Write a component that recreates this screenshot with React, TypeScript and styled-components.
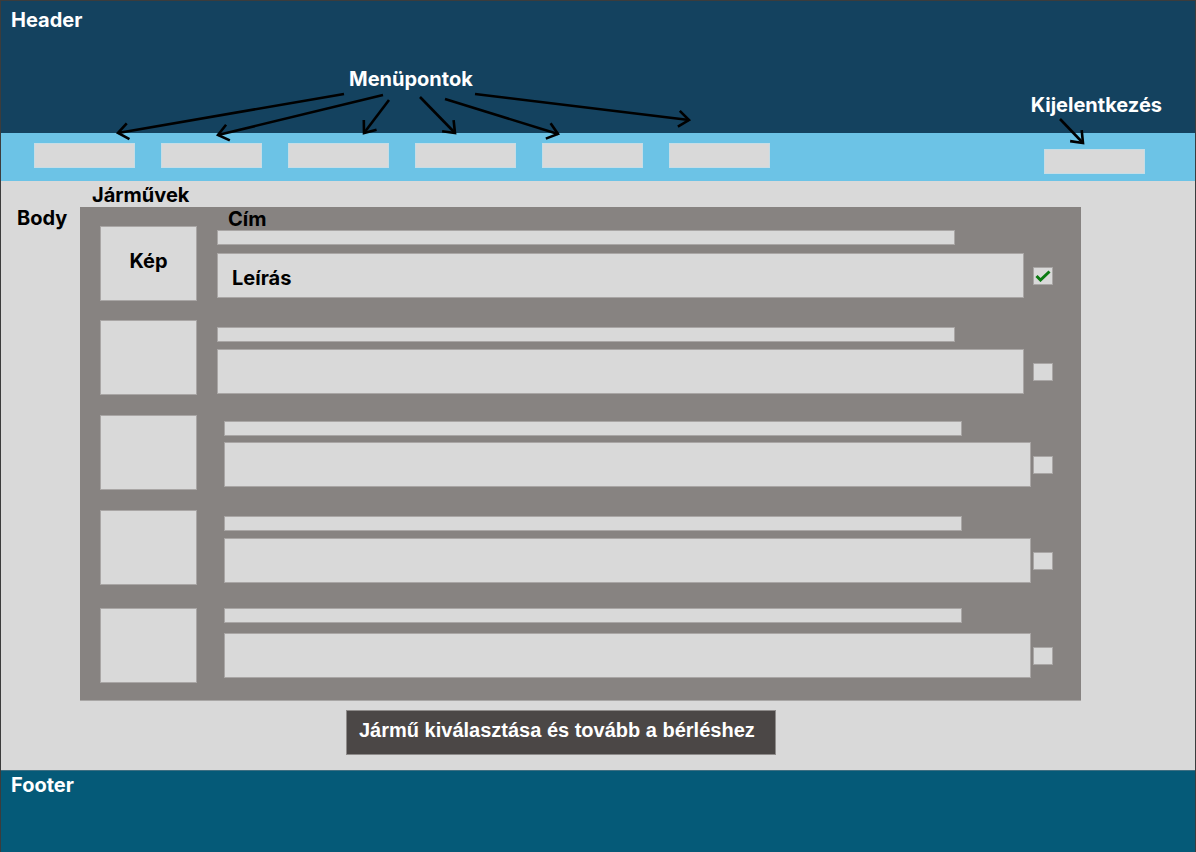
import React from "react";
import styled, { createGlobalStyle } from "styled-components";

const GlobalStyle = createGlobalStyle`
  html, body { margin: 0; padding: 0; background: #d9d9d9; }
  body { font-family: Inter, "Noto Sans", "Liberation Sans", sans-serif; }
  * { box-sizing: border-box; }
`;

const Frame = styled.div`
  position: relative;
  width: 1196px;
  height: 852px;
  display: flex;
  flex-direction: column;
  overflow: hidden;
  border: 1px solid #3c3c3c;
  border-bottom: none;
`;

const Label = styled.div<{ $light?: boolean }>`
  font-size: 20px;
  font-weight: 700;
  line-height: 24px;
  color: ${(p) => (p.$light ? "#ffffff" : "#000000")};
  white-space: nowrap;
`;

const Header = styled.header`
  height: 132px;
  background: #14425f;
  padding: 7px 10px 0;
  display: flex;
  flex-direction: column;
`;

const Annotations = styled.div`
  display: flex;
  align-items: flex-start;
`;

const MenuNote = styled(Label)`
  margin-top: 35px;
  margin-left: 338px;
`;

const LogoutNote = styled(Label)`
  margin-top: 61px;
  margin-left: auto;
  margin-right: 23px;
`;

const Nav = styled.nav`
  height: 48px;
  background: #6cc3e6;
  display: flex;
  align-items: flex-start;
  padding-left: 33px;
  gap: 26px;
`;

const NavItem = styled.div<{ $top: number }>`
  width: 101px;
  height: 25px;
  margin-top: ${(p) => p.$top}px;
  background: #d9d9d9;
  border: 1px solid #c6dde6;
`;

const LogoutItem = styled(NavItem)`
  margin-left: auto;
  margin-right: 50px;
`;

const Body = styled.main`
  flex: 1;
  background: #d9d9d9;
  display: flex;
  align-items: flex-start;
`;

const BodyLabel = styled(Label)`
  width: 79px;
  padding-left: 16px;
  padding-top: 25px;
`;

const BodyMain = styled.div`
  display: flex;
  flex-direction: column;
`;

const SectionTitle = styled(Label)`
  margin-left: 12px;
  margin-top: 3px;
  line-height: 23px;
`;

const Panel = styled.section`
  position: relative;
  width: 1001px;
  height: 494px;
  background: #878381;
  border-bottom: 1px solid #a9a7a6;
  padding: 19px 28px 19px 20px;
  display: flex;
  flex-direction: column;
  gap: 20px;
`;

const PanelCaption = styled(Label)`
  position: absolute;
  top: 0;
  left: 148px;
`;

const Row = styled.div<{ $shift: number }>`
  height: 75px;
  margin-top: ${(p) => p.$shift}px;
  display: flex;
  align-items: flex-start;
`;

const Picture = styled.div`
  width: 97px;
  height: 75px;
  background: #d9d9d9;
  border: 1px solid #a9a6a5;
  display: flex;
  justify-content: center;
  padding-top: 22px;
`;

const Content = styled.div<{ $indent: number; $top: number; $gap: number }>`
  flex: 1;
  margin-left: ${(p) => p.$indent}px;
  padding-top: ${(p) => p.$top}px;
  display: flex;
  flex-direction: column;
  gap: ${(p) => p.$gap}px;
`;

const TitleBar = styled.div`
  width: 738px;
  height: 15px;
  background: #d9d9d9;
  border: 1px solid #a9a6a5;
`;

const DescRow = styled.div`
  display: flex;
  align-items: center;
`;

const Desc = styled.div`
  width: 807px;
  height: 45px;
  background: #d9d9d9;
  border: 1px solid #a9a6a5;
  padding: 12px 0 0 14px;
`;

const Check = styled.div`
  margin-left: auto;
  width: 20px;
  height: 18px;
  background: #d9d9d9;
  border: 1px solid #a9a6a5;
  display: flex;
  align-items: center;
  justify-content: center;
`;

const Proceed = styled.button`
  margin-top: 9px;
  margin-left: 266px;
  width: 430px;
  height: 45px;
  background: #4b4746;
  border: 1px solid #8e8b8a;
  padding: 7px 0 0 12px;
  text-align: left;
  display: flex;
  align-items: flex-start;
  cursor: pointer;
`;

const Footer = styled.footer`
  height: 82px;
  background: #055a78;
  border-top: 1px solid #3f6f82;
  padding: 2px 10px 0;
`;

const Overlay = styled.svg`
  position: absolute;
  left: 0;
  top: 0;
  pointer-events: none;
`;

type Pt = [number, number];
const arrows: [Pt, Pt][] = [
  [[343, 93], [117, 132]],
  [[382, 94], [217, 134]],
  [[388, 99], [363, 132]],
  [[419, 96], [454, 132]],
  [[444, 98], [557, 133]],
  [[474, 93], [688, 119]],
  [[1059, 118], [1082, 142]],
];

function Arrow({ from, to }: { from: Pt; to: Pt }) {
  const [x1, y1] = from;
  const [x2, y2] = to;
  const ang = Math.atan2(y2 - y1, x2 - x1);
  const len = 13;
  const spread = (38 * Math.PI) / 180;
  const a = [x2 - len * Math.cos(ang - spread), y2 - len * Math.sin(ang - spread)];
  const b = [x2 - len * Math.cos(ang + spread), y2 - len * Math.sin(ang + spread)];
  return (
    <g stroke="#000" strokeWidth={2.6} fill="none" strokeLinecap="butt">
      <line x1={x1} y1={y1} x2={x2} y2={y2} />
      <polyline points={`${a[0]},${a[1]} ${x2},${y2} ${b[0]},${b[1]}`} />
    </g>
  );
}

const rows = [
  { indent: 20, top: 4, gap: 8, shift: 0, first: true, checked: true },
  { indent: 20, top: 7, gap: 7, shift: -1 },
  { indent: 27, top: 6, gap: 6, shift: 0 },
  { indent: 27, top: 6, gap: 7, shift: 0 },
  { indent: 27, top: 0, gap: 10, shift: 3 },
];

export default function App() {
  return (
    <>
      <GlobalStyle />
      <Frame>
        <Header>
          <Label $light>Header</Label>
          <Annotations>
            <MenuNote $light>Menüpontok</MenuNote>
            <LogoutNote $light>Kijelentkezés</LogoutNote>
          </Annotations>
        </Header>
        <Nav>
          {[0, 1, 2, 3, 4, 5].map((i) => (
            <NavItem key={i} $top={10} />
          ))}
          <LogoutItem $top={16} />
        </Nav>
        <Body>
          <BodyLabel>Body</BodyLabel>
          <BodyMain>
            <SectionTitle>Járművek</SectionTitle>
            <Panel>
              <PanelCaption>Cím</PanelCaption>
              {rows.map((r, i) => (
                <Row key={i} $shift={r.shift}>
                  <Picture>{r.first && <Label>Kép</Label>}</Picture>
                  <Content $indent={r.indent} $top={r.top} $gap={r.gap}>
                    <TitleBar />
                    <DescRow>
                      <Desc>{r.first && <Label>Leírás</Label>}</Desc>
                      <Check>
                        {r.checked && (
                          <svg width="16" height="12" viewBox="0 0 16 12">
                            <path
                              d="M1.5 6 L5.5 10 L14.5 1.5"
                              stroke="#0b7a12"
                              strokeWidth="3"
                              fill="none"
                            />
                          </svg>
                        )}
                      </Check>
                    </DescRow>
                  </Content>
                </Row>
              ))}
            </Panel>
            <Proceed>
              <Label $light>Jármű kiválasztása és tovább a bérléshez</Label>
            </Proceed>
          </BodyMain>
        </Body>
        <Footer>
          <Label $light>Footer</Label>
        </Footer>
        <Overlay width="1196" height="180" viewBox="0 0 1196 180">
          {arrows.map(([f, t], i) => (
            <Arrow key={i} from={f} to={t} />
          ))}
        </Overlay>
      </Frame>
    </>
  );
}
